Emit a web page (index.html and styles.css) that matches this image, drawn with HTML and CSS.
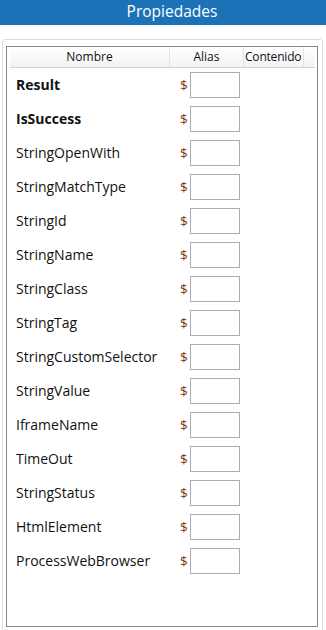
FILE: index.html
```html
<!DOCTYPE html>
<html lang="es">
<head>
    <meta charset="UTF-8">
    <meta name="viewport" content="width=device-width, initial-scale=1.0">
    <title>Propiedades</title>
    <link rel="stylesheet" href="styles.css">
</head>
<body>
    <div class="title-bar">Propiedades</div>

    <div class="group-box">
        <div class="grid">
            <div class="grid-header">
                <div class="col-name">Nombre</div>
                <div class="col-alias">Alias</div>
                <div class="col-content">Contenido</div>
                <div class="col-filler"></div>
            </div>

            <div class="row bold">
                <div class="cell-name">Result</div>
                <div class="cell-alias"><span class="dollar">$</span><input type="text" class="alias-box"></div>
            </div>
            <div class="row bold">
                <div class="cell-name">IsSuccess</div>
                <div class="cell-alias"><span class="dollar">$</span><input type="text" class="alias-box"></div>
            </div>
            <div class="row">
                <div class="cell-name">StringOpenWith</div>
                <div class="cell-alias"><span class="dollar">$</span><input type="text" class="alias-box"></div>
            </div>
            <div class="row">
                <div class="cell-name">StringMatchType</div>
                <div class="cell-alias"><span class="dollar">$</span><input type="text" class="alias-box"></div>
            </div>
            <div class="row">
                <div class="cell-name">StringId</div>
                <div class="cell-alias"><span class="dollar">$</span><input type="text" class="alias-box"></div>
            </div>
            <div class="row">
                <div class="cell-name">StringName</div>
                <div class="cell-alias"><span class="dollar">$</span><input type="text" class="alias-box"></div>
            </div>
            <div class="row">
                <div class="cell-name">StringClass</div>
                <div class="cell-alias"><span class="dollar">$</span><input type="text" class="alias-box"></div>
            </div>
            <div class="row">
                <div class="cell-name">StringTag</div>
                <div class="cell-alias"><span class="dollar">$</span><input type="text" class="alias-box"></div>
            </div>
            <div class="row">
                <div class="cell-name">StringCustomSelector</div>
                <div class="cell-alias"><span class="dollar">$</span><input type="text" class="alias-box"></div>
            </div>
            <div class="row">
                <div class="cell-name">StringValue</div>
                <div class="cell-alias"><span class="dollar">$</span><input type="text" class="alias-box"></div>
            </div>
            <div class="row">
                <div class="cell-name">IframeName</div>
                <div class="cell-alias"><span class="dollar">$</span><input type="text" class="alias-box"></div>
            </div>
            <div class="row">
                <div class="cell-name">TimeOut</div>
                <div class="cell-alias"><span class="dollar">$</span><input type="text" class="alias-box"></div>
            </div>
            <div class="row">
                <div class="cell-name">StringStatus</div>
                <div class="cell-alias"><span class="dollar">$</span><input type="text" class="alias-box"></div>
            </div>
            <div class="row">
                <div class="cell-name">HtmlElement</div>
                <div class="cell-alias"><span class="dollar">$</span><input type="text" class="alias-box"></div>
            </div>
            <div class="row">
                <div class="cell-name">ProcessWebBrowser</div>
                <div class="cell-alias"><span class="dollar">$</span><input type="text" class="alias-box"></div>
            </div>
        </div>
    </div>
</body>
</html>
```

FILE: styles.css
```css
body {
    margin: 0;
    background: #ffffff;
    font-family: 'Open Sans', 'Noto Sans', sans-serif;
    color: #111;
    overflow: hidden;
}
.title-bar {
    height: 25px;
    background: #1c72b7;
    color: #fff;
    font-size: 15.5px;
    line-height: 23px;
    text-align: center;
    padding-left: 18px;
}

/* Outer group box */
.group-box {
    margin: 14px 0 0 2px;
    width: 321px;
    height: 600px;
    border: 1px solid #d5dfe5;
    border-radius: 3px;
    padding: 6px 0 0 3px;
    box-sizing: border-box;
}

/* Data grid */
.grid {
    width: 312px;
    height: 581px;
    border: 1px solid #828790;
    box-sizing: border-box;
    padding-left: 3px;
}
.grid-header {
    display: flex;
    height: 20px;
    width: 305px;
    background: linear-gradient(#ffffff, #f2f3f5);
    border-bottom: 1px solid #d5d5d5;
    font-size: 12px;
    line-height: 19px;
}
.grid-header > div {
    border-right: 1px solid #e2e3e5;
    box-sizing: border-box;
}
.col-name {
    width: 160px;
    text-align: center;
}
.col-alias {
    width: 74px;
    text-align: center;
}
.col-content {
    width: 60px;
    padding-left: 1px;
    white-space: nowrap;
    overflow: hidden;
    letter-spacing: -0.2px;
}
.col-filler {
    flex: 1;
    border-right: none !important;
}

.row {
    display: flex;
    align-items: center;
    height: 34px;
    font-size: 14px;
    line-height: 18px;
}
.row.bold {
    font-weight: bold;
}
.cell-name {
    width: 160px;
    padding-left: 6px;
    padding-bottom: 1px;
    box-sizing: border-box;
    white-space: nowrap;
}
.cell-alias {
    display: flex;
    align-items: center;
    padding-left: 10px;
}
.dollar {
    color: #7a3410;
    font-weight: normal;
    font-size: 13.5px;
    width: 10px;
}
.alias-box {
    width: 50px;
    height: 26px;
    margin: 0;
    padding: 0;
    border: 1px solid #abadb3;
    box-sizing: border-box;
    background: #fff;
    outline: none;
}
```
